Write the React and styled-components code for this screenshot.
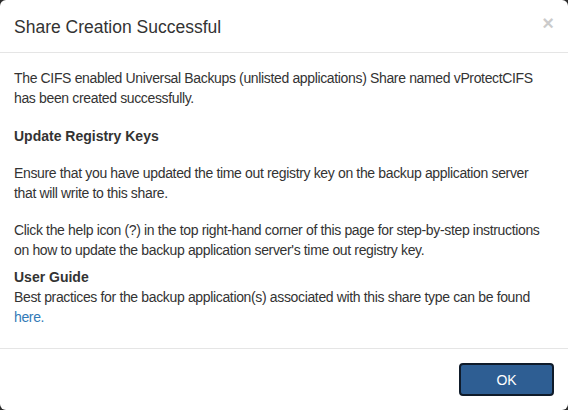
import React from "react";
import styled, { createGlobalStyle } from "styled-components";

const GlobalStyle = createGlobalStyle`
  html, body {
    margin: 0;
    padding: 0;
    background: #2b2b2b;
  }
  body {
    font-family: "Liberation Sans", Arial, sans-serif;
    font-size: 14px;
    line-height: 20px;
    color: #333;
  }
`;

const Modal = styled.div`
  width: 568px;
  height: 410px;
  background: #fff;
  border-radius: 6px;
  display: flex;
  flex-direction: column;
  overflow: hidden;
`;

const Header = styled.div`
  height: 53px;
  box-sizing: border-box;
  padding: 0 14px;
  border-bottom: 1px solid #e5e5e5;
  display: flex;
  align-items: center;
  justify-content: space-between;
`;

const Title = styled.h4`
  margin: 0;
  font-size: 17.5px;
  font-weight: 400;
  color: #333;
  line-height: 22px;
  padding-top: 1px;
`;

const Close = styled.button`
  border: 0;
  background: none;
  padding: 0;
  font-family: "Liberation Sans", Arial, sans-serif;
  font-size: 20px;
  font-weight: 700;
  line-height: 1;
  color: #000;
  opacity: 0.2;
  cursor: pointer;
  margin-top: -6px;
`;

const Body = styled.div`
  flex: 1;
  padding: 15px 14px 0;
  border-bottom: 1px solid #e5e5e5;
  letter-spacing: -0.35px;
  white-space: nowrap;
`;

const Para = styled.p`
  margin: 0 0 ${(p) => p.$gap ?? 17}px;
`;

const Heading = styled.div`
  font-weight: 700;
  letter-spacing: 0;
  margin-bottom: ${(p) => p.$gap ?? 0}px;
`;

const Link = styled.a`
  color: #337ab7;
  text-decoration: none;
`;

const Footer = styled.div`
  height: 61px;
  box-sizing: border-box;
  padding: 14px 14px 0;
  display: flex;
  justify-content: flex-end;
  align-items: flex-start;
`;

const OkButton = styled.button`
  width: 95px;
  height: 33px;
  box-sizing: border-box;
  background: #2e5e93;
  border: 2px solid #0f1b2a;
  border-radius: 4px;
  color: #fff;
  font-family: "Liberation Sans", Arial, sans-serif;
  font-size: 14px;
  cursor: pointer;
`;

export default function App() {
  return (
    <>
      <GlobalStyle />
      <Modal>
        <Header>
          <Title>Share Creation Successful</Title>
          <Close aria-label="Close">×</Close>
        </Header>
        <Body>
          <Para $gap={18}>
            The CIFS enabled Universal Backups (unlisted applications) Share named vProtectCIFS
            <br />
            has been created successfully.
          </Para>
          <Heading $gap={17}>Update Registry Keys</Heading>
          <Para>
            Ensure that you have updated the time out registry key on the backup application server
            <br />
            that will write to this share.
          </Para>
          <Para $gap={7}>
            Click the help icon (?) in the top right-hand corner of this page for step-by-step instructions
            <br />
            on how to update the backup application server's time out registry key.
          </Para>
          <Heading>User Guide</Heading>
          <Para $gap={0}>
            Best practices for the backup application(s) associated with this share type can be found
            <br />
            <Link href="#">here.</Link>
          </Para>
        </Body>
        <Footer>
          <OkButton>OK</OkButton>
        </Footer>
      </Modal>
    </>
  );
}
